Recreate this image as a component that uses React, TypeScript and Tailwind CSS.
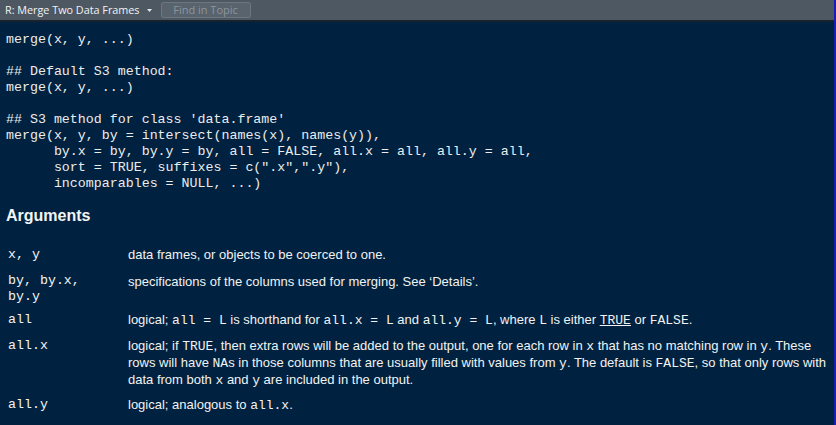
import React from "react";

const mono = { fontFamily: '"Liberation Mono", "Courier New", monospace' };

function C({ children, u }: { children: React.ReactNode; u?: boolean }) {
  return (
    <span className={u ? "underline leading-none" : "leading-none"} style={mono}>
      {children}
    </span>
  );
}

const codeLines = [
  "merge(x, y, ...)",
  "",
  "## Default S3 method:",
  "merge(x, y, ...)",
  "",
  "## S3 method for class 'data.frame'",
  "merge(x, y, by = intersect(names(x), names(y)),",
  "      by.x = by, by.y = by, all = FALSE, all.x = all, all.y = all,",
  "      sort = TRUE, suffixes = c(\".x\",\".y\"),",
  "      incomparables = NULL, ...)",
];

export default function App() {
  return (
    <div className="w-[836px] h-[425px] overflow-hidden bg-[#002240] border-r-2 border-[#1c1cb0] flex flex-col">
      {/* toolbar */}
      <div className="h-[20px] shrink-0 bg-[#4d5863] flex items-center pl-[5px]">
        <span
          className="text-[10.8px] text-[#f2f2f2] whitespace-nowrap"
          style={{ fontFamily: '"Open Sans", "Noto Sans", sans-serif' }}
        >
          R: Merge Two Data Frames
        </span>
        <svg width="5" height="3" viewBox="0 0 5 3" className="ml-[7px] mt-[1px]">
          <path d="M0 0 H5 L2.5 3 Z" fill="#e8e8e8" />
        </svg>
        <div
          className="ml-[9px] w-[90px] h-[16px] rounded-[2px] border border-[#6c7680] bg-[#58636e] flex items-center justify-center text-[11px] text-[#8d959d]"
          style={{ fontFamily: '"Open Sans", "Noto Sans", sans-serif' }}
        >
          Find in Topic
        </div>
      </div>
      <div className="h-[2px] shrink-0 bg-[#17222e]" />

      {/* content */}
      <div
        className="pl-[6px] pt-[10px] text-[#f2f2f2]"
        style={{ fontFamily: '"Liberation Sans", Arial, sans-serif' }}
      >
        <pre className="text-[13.3px] leading-[16px] text-[#ececec] m-0" style={mono}>
          {codeLines.map((l, i) => (
            <div key={i} className="h-[16px] whitespace-pre">
              {l}
            </div>
          ))}
        </pre>

        <h2 className="mt-[15px] text-[16px] leading-[18px] font-bold text-[#f4f4f4]">Arguments</h2>

        <div className="pl-[2px] text-[13px] leading-[17px]">
          <div className="mt-[20.5px] flex">
            <div className="w-[120px] shrink-0 text-[13.3px]" style={mono}>x, y</div>
            <div className="h-[17px]">data frames, or objects to be coerced to one.</div>
          </div>
          <div className="mt-[10px] flex">
            <div className="w-[120px] shrink-0 leading-[16px] text-[13.3px]" style={mono}>
              by, by.x,
              <br />
              by.y
            </div>
            <div className="h-[17px]">specifications of the columns used for merging. See ‘Details’.</div>
          </div>
          <div className="mt-[6px] flex">
            <div className="w-[120px] shrink-0 text-[13.3px]" style={mono}>all</div>
            <div className="whitespace-nowrap h-[17px]">
              logical; <C>all = L</C> is shorthand for <C>all.x = L</C> and <C>all.y = L</C>, where{" "}
              <C>L</C> is either <C u>TRUE</C> or <C>FALSE</C>.
            </div>
          </div>
          <div className="mt-[9.5px] flex">
            <div className="w-[120px] shrink-0 text-[13.3px]" style={mono}>all.x</div>
            <div className="whitespace-nowrap">
              <div className="h-[17px]">
                logical; if <C>TRUE</C>, then extra rows will be added to the output, one for each row in{" "}
                <C>x</C> that has no matching row in <C>y</C>. These
              </div>
              <div className="h-[17px]">
                rows will have <C>NA</C>s in those columns that are usually filled with values from <C>y</C>. The
                default is <C>FALSE</C>, so that only rows with
              </div>
              <div className="h-[17px]">
                data from both <C>x</C> and <C>y</C> are included in the output.
              </div>
            </div>
          </div>
          <div className="mt-[8px] flex">
            <div className="w-[120px] shrink-0 text-[13.3px]" style={mono}>all.y</div>
            <div className="h-[17px]">
              logical; analogous to <C>all.x</C>.
            </div>
          </div>
        </div>
      </div>
    </div>
  );
}
